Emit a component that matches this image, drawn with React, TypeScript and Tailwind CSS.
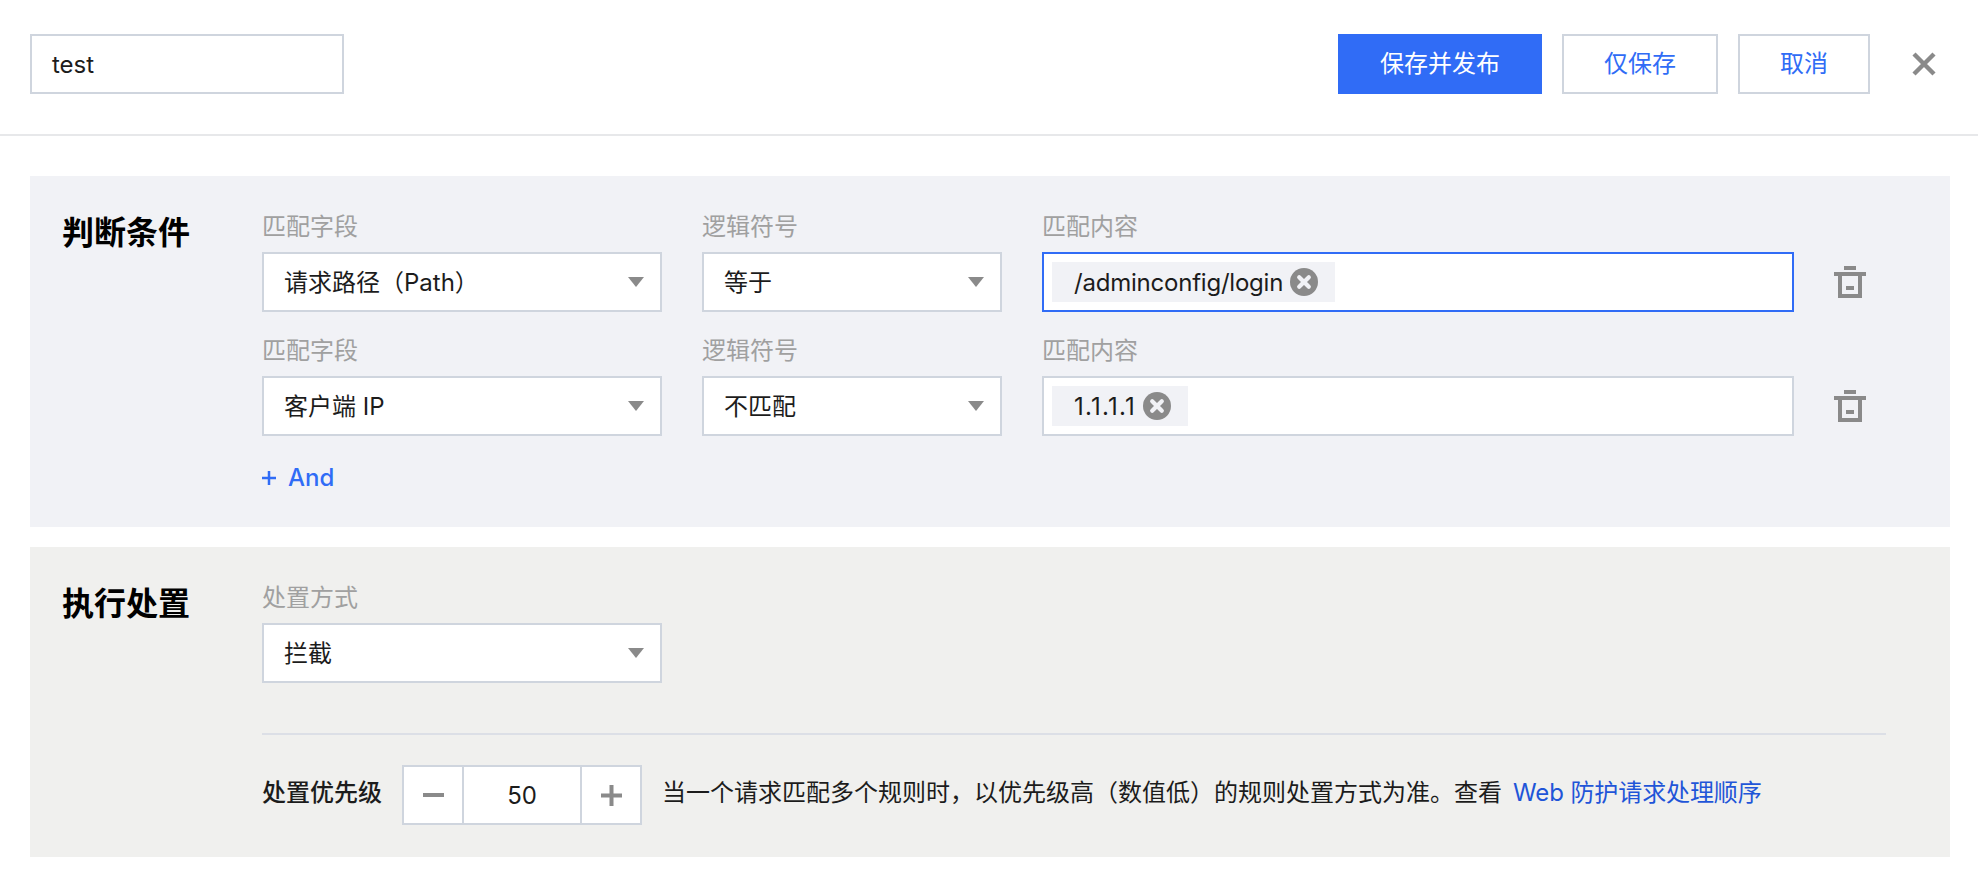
function Caret() {
  return (
    <svg width="16" height="10" viewBox="0 0 16 10" className="shrink-0">
      <path d="M0 0h16L8 10z" fill="#8a8a8a" />
    </svg>
  )
}

function TrashIcon() {
  return (
    <svg width="32" height="32" viewBox="0 0 32 32" className="shrink-0">
      <path
        fill="#8a8a8a"
        fillRule="evenodd"
        d="M10 0h12v4H10zM0 6h32v4H0zM4 10h4v18h16V10h4v22H4zM12 20h8v4h-8z"
      />
    </svg>
  )
}

function ClearIcon() {
  return (
    <svg width="28" height="28" viewBox="0 0 28 28" className="shrink-0">
      <circle cx="14" cy="14" r="14" fill="#8a8a8a" />
      <path d="M9.2 9.2l9.6 9.6M18.8 9.2l-9.6 9.6" stroke="#f1f2f6" strokeWidth="4.2" strokeLinecap="round" />
    </svg>
  )
}

function Select({ value, width }: { value: string; width: string }) {
  return (
    <div className={`flex h-[60px] items-center justify-between border-2 border-[#cfd5de] bg-white pl-5 pr-4 text-[24px] text-[#1c1c1c] ${width}`}>
      <span className="pt-0.5">{value}</span>
      <Caret />
    </div>
  )
}

function FieldLabel({ children }: { children: string }) {
  return <div className="mb-2 h-9 pt-px text-[24px] leading-9 text-[#a0a0a0]">{children}</div>
}

function TagInput({ tag, focused, tracking }: { tag: string; focused?: boolean; tracking: string }) {
  return (
    <div className={`flex h-[60px] w-[752px] items-center border-2 bg-white pl-2 ${focused ? 'border-[#306cf6]' : 'border-[#cfd5de]'}`}>
      <div className="flex h-10 items-center gap-[7px] bg-[#f1f2f6] pl-[22px] pr-[17px] text-[24px] text-[#1c1c1c]">
        <span className={`pt-0.5 ${tracking}`}>{tag}</span>
        <ClearIcon />
      </div>
    </div>
  )
}

function ConditionRow({ field, logic, tag, focused, tracking }: { field: string; logic: string; tag: string; focused?: boolean; tracking: string }) {
  return (
    <div className="flex items-end">
      <div className="w-[400px]">
        <FieldLabel>匹配字段</FieldLabel>
        <Select value={field} width="w-[400px]" />
      </div>
      <div className="ml-10 w-[300px]">
        <FieldLabel>逻辑符号</FieldLabel>
        <Select value={logic} width="w-[300px]" />
      </div>
      <div className="ml-10">
        <FieldLabel>匹配内容</FieldLabel>
        <TagInput tag={tag} focused={focused} tracking={tracking} />
      </div>
      <div className="ml-10 flex h-[60px] items-center">
        <TrashIcon />
      </div>
    </div>
  )
}

export default function App() {
  return (
    <div className="h-[888px] w-[1978px] overflow-hidden bg-white text-[24px] [font-family:Inter,'Noto_Sans_CJK_SC',sans-serif]">
      {/* Header */}
      <header className="flex h-[136px] items-start justify-between border-b-2 border-[#e7e8ea] pl-[30px] pr-[42px] pt-[34px]">
        <div className="flex h-[60px] w-[314px] items-center border-2 border-[#cfd5de] pl-5 pt-0.5 text-[#1c1c1c]">test</div>
        <div className="flex items-center">
          <button className="h-[60px] w-[204px] bg-[#306cf6] text-white">保存并发布</button>
          <button className="ml-5 h-[60px] w-[156px] border-2 border-[#cfd5de] text-[#306cf6]">仅保存</button>
          <button className="ml-5 h-[60px] w-[132px] border-2 border-[#cfd5de] text-[#306cf6]">取消</button>
          <svg width="24" height="24" viewBox="0 0 24 24" className="ml-[42px]">
            <path d="M2 2l20 20M22 2L2 22" stroke="#8a8a8a" strokeWidth="4.4" />
          </svg>
        </div>
      </header>

      <main className="pl-[30px] pr-7 pt-10">
        {/* Conditions */}
        <section className="flex bg-[#f1f2f6] pb-8 pl-8 pt-8">
          <h2 className="w-[200px] shrink-0 pt-px text-[32px] font-bold leading-[48px] text-black">判断条件</h2>
          <div className="flex flex-col gap-5">
            <ConditionRow field="请求路径（Path）" logic="等于" tag="/adminconfig/login" tracking="tracking-[-0.22px]" focused />
            <ConditionRow field="客户端 IP" logic="不匹配" tag="1.1.1.1" tracking="tracking-[1.2px]" />
            <div className="mt-[3px] flex h-9 items-center pt-0.5 font-medium text-[#306cf6]">
              <svg width="14" height="14" viewBox="0 0 14 14" className="mr-3 shrink-0">
                <path d="M5.75 0h2.5v5.75H14v2.5H8.25V14h-2.5V8.25H0v-2.5h5.75z" fill="#306cf6" />
              </svg>
              And
            </div>
          </div>
        </section>

        {/* Action */}
        <section className="mt-5 flex bg-[#f0f0ee] pb-8 pl-8 pr-16 pt-8">
          <h2 className="w-[200px] shrink-0 pt-px text-[32px] font-bold leading-[48px] text-black">执行处置</h2>
          <div className="flex-1">
            <FieldLabel>处置方式</FieldLabel>
            <Select value="拦截" width="w-[400px]" />
            <div className="mt-[50px] h-0.5 bg-[#dcdfe6]" />
            <div className="mt-[30px] flex items-center">
              <span className="mb-1 font-medium text-[#1c1c1c]">处置优先级</span>
              <div className="ml-5 flex h-[60px] w-[240px] items-stretch border-2 border-[#cfd5de] bg-white">
                <div className="flex w-[58px] items-center justify-center">
                  <svg width="21" height="4" viewBox="0 0 21 4"><path d="M0 0h21v4H0z" fill="#8a8a8a" /></svg>
                </div>
                <div className="flex flex-1 items-center justify-center border-x-2 border-[#cfd5de] pt-0.5 text-[#1c1c1c]">50</div>
                <div className="flex w-[58px] items-center justify-center">
                  <svg width="21" height="21" viewBox="0 0 21 21"><path d="M8.5 0h4v8.5H21v4h-8.5V21h-4v-8.5H0v-4h8.5z" fill="#8a8a8a" /></svg>
                </div>
              </div>
              <span className="mb-1 ml-5 text-[#1c1c1c]">当一个请求匹配多个规则时，以优先级高（数值低）的规则处置方式为准。查看</span>
              <span className="mb-1 ml-[11px] tracking-[-0.1px] text-[#1f55d8]">Web 防护请求处理顺序</span>
            </div>
          </div>
        </section>
      </main>
    </div>
  )
}
